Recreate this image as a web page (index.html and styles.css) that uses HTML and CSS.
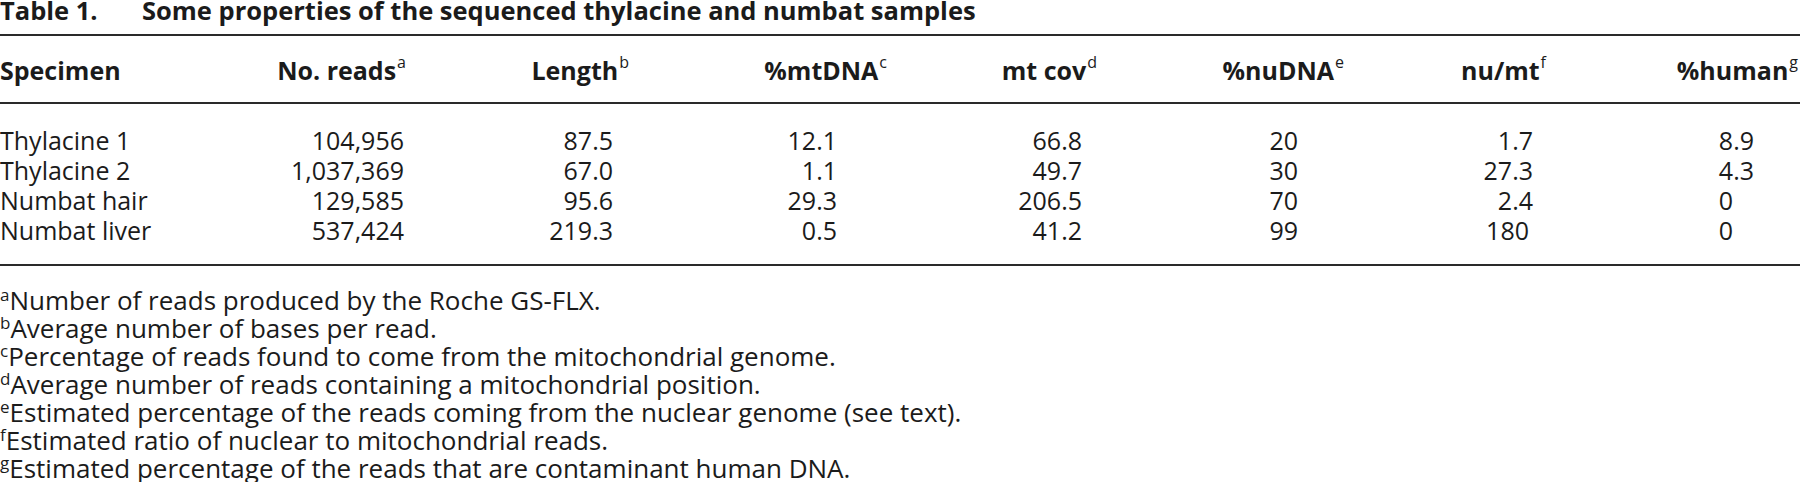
FILE: index.html
```html
<!DOCTYPE html>
<html lang="en">
<head>
<meta charset="utf-8">
<title>Table 1</title>
<link rel="stylesheet" href="styles.css">
</head>
<body>
<div class="page">
  <div class="caption"><span class="label">Table 1.</span><span class="ctext">Some properties of the sequenced thylacine and numbat samples</span></div>
  <table class="t">
    <colgroup>
      <col class="c1"><col class="c2"><col class="c3"><col class="c4"><col class="c5"><col class="c6"><col class="c7"><col class="c8">
    </colgroup>
    <thead>
      <tr>
        <th>Specimen</th>
        <th>No. reads<sup>a</sup></th>
        <th>Length<sup>b</sup></th>
        <th>%mtDNA<sup>c</sup></th>
        <th>mt cov<sup>d</sup></th>
        <th>%nuDNA<sup>e</sup></th>
        <th>nu/mt<sup>f</sup></th>
        <th>%human<sup>g</sup></th>
      </tr>
    </thead>
    <tbody>
      <tr class="first">
        <td>Thylacine 1</td><td>104,956</td><td>87.5</td><td>12.1</td><td>66.8</td><td>20</td><td>1.7</td><td>8.9</td>
      </tr>
      <tr>
        <td>Thylacine 2</td><td>1,037,369</td><td>67.0</td><td>1.1</td><td>49.7</td><td>30</td><td>27.3</td><td>4.3</td>
      </tr>
      <tr>
        <td>Numbat hair</td><td>129,585</td><td>95.6</td><td>29.3</td><td>206.5</td><td>70</td><td>2.4</td><td class="whole">0</td>
      </tr>
      <tr class="last">
        <td>Numbat liver</td><td>537,424</td><td>219.3</td><td>0.5</td><td>41.2</td><td>99</td><td class="int3">180</td><td class="whole">0</td>
      </tr>
    </tbody>
  </table>
  <div class="notes">
    <p class="note"><sup>a</sup>Number of reads produced by the Roche GS-FLX.</p>
    <p class="note"><sup>b</sup>Average number of bases per read.</p>
    <p class="note"><sup>c</sup>Percentage of reads found to come from the mitochondrial genome.</p>
    <p class="note"><sup>d</sup>Average number of reads containing a mitochondrial position.</p>
    <p class="note"><sup>e</sup>Estimated percentage of the reads coming from the nuclear genome (see text).</p>
    <p class="note"><sup>f</sup>Estimated ratio of nuclear to mitochondrial reads.</p>
    <p class="note"><sup>g</sup>Estimated percentage of the reads that are contaminant human DNA.</p>
  </div>
</div>
</body>
</html>
```
FILE: styles.css
```css
html, body {
  margin: 0;
  padding: 0;
  background: #ffffff;
}

.page {
  width: 1800px;
  font-family: "Open Sans", "Noto Sans", sans-serif;
  color: #1b1b1b;
}

.caption {
  font-size: 25.5px;
  font-weight: 700;
  line-height: 20px;
  height: 20px;
  padding-bottom: 14px;
  border-bottom: 2px solid #2a2a2a;
  white-space: nowrap;
}

.label {
  display: inline-block;
  width: 142px;
}

.t {
  width: 1800px;
  border-collapse: collapse;
  table-layout: fixed;
  font-size: 25px;
  line-height: 30px;
}

.c1 { width: 250px; }
.c2 { width: 156px; }
.c3 { width: 223px; }
.c4 { width: 258px; }
.c5 { width: 210px; }
.c6 { width: 247px; }
.c7 { width: 202px; }
.c8 { width: 254px; }

.t th,
.t td {
  padding: 0;
  text-align: right;
  white-space: nowrap;
  vertical-align: top;
}

.t th:first-child,
.t td:first-child {
  text-align: left;
}

.t thead th {
  font-weight: 700;
  padding-top: 19px;
  padding-bottom: 17px;
  border-bottom: 2px solid #2a2a2a;
}

.t thead th:last-child {
  padding-right: 2px;
}

.t tbody tr.first td { padding-top: 21px; }
.t tbody tr.last td { padding-bottom: 19px; border-bottom: 2px solid #2a2a2a; }

.t tbody td:nth-child(2) { padding-right: 2px; }
.t tbody td:nth-child(3) { padding-right: 16px; }
.t tbody td:nth-child(4) { padding-right: 50px; }
.t tbody td:nth-child(5) { padding-right: 15px; }
.t tbody td:nth-child(6) { padding-right: 46px; }
.t tbody td:nth-child(7) { padding-right: 13px; }
.t tbody td:nth-child(8) { padding-right: 46px; }
.t tbody td.int3 { padding-right: 17px; }
.t tbody td.whole { padding-right: 67px; }

sup {
  line-height: 0;
}

.t th sup {
  font-size: 16px;
  font-weight: 400;
  vertical-align: 12px;
  margin-left: 1px;
}

.notes {
  padding-top: 20px;
}

.note {
  margin: 0;
  font-size: 26px;
  line-height: 28px;
  white-space: nowrap;
}

.note sup {
  font-size: 17px;
  vertical-align: 9px;
}
```
